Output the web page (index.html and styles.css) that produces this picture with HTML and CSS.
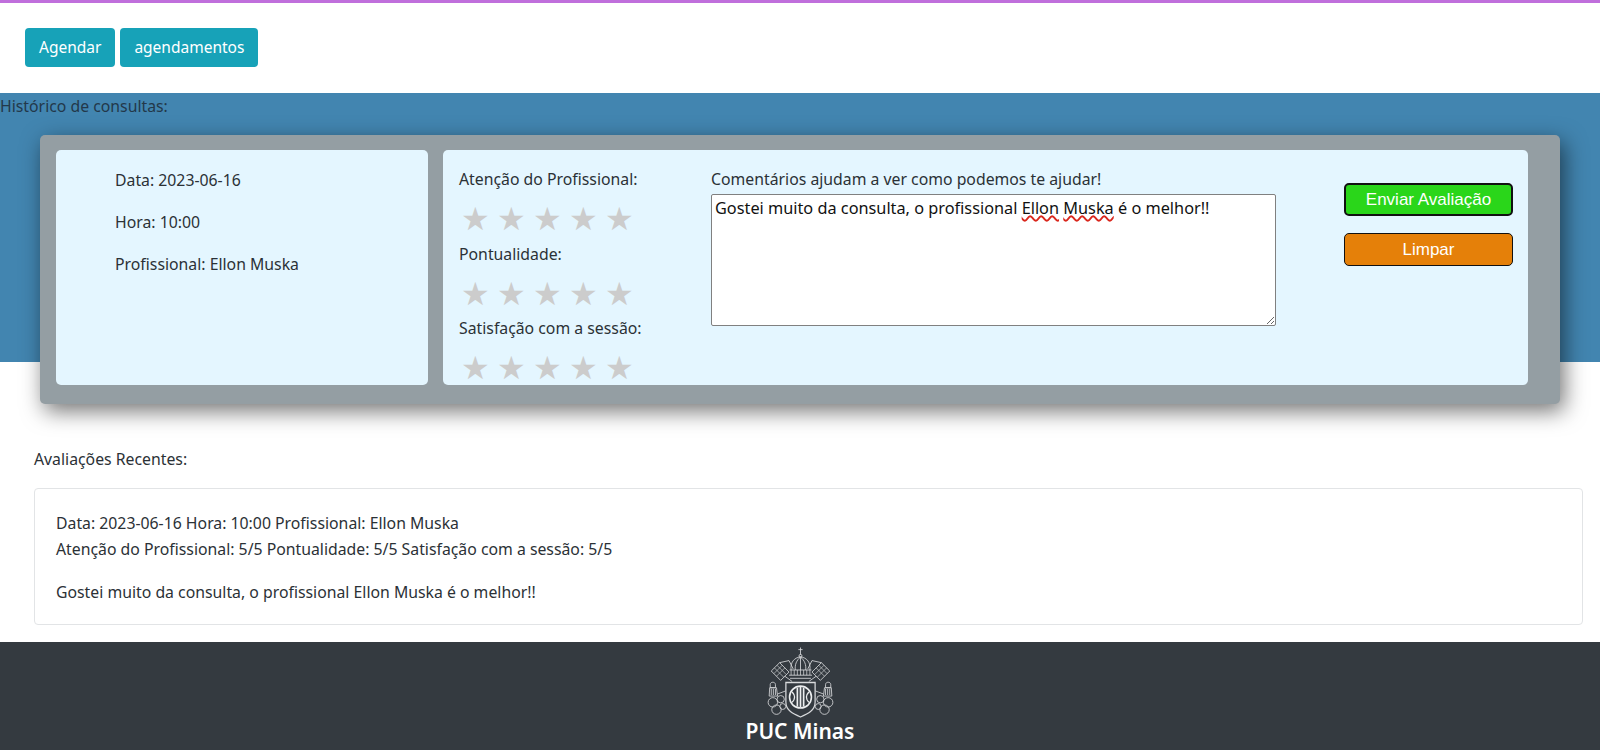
FILE: index.html
```html
<!DOCTYPE html>
<html lang="pt-BR">
<head>
    <meta charset="UTF-8">
    <meta name="viewport" content="width=device-width, initial-scale=1.0">
    <title>Histórico de consultas</title>
    <link rel="stylesheet" href="styles.css">
</head>
<body>
    <nav class="topbar">
        <a class="nav-btn" href="#">Agendar</a>
        <a class="nav-btn" href="#">agendamentos</a>
    </nav>

    <section class="history">
        <p class="history-title">Histórico de consultas:</p>
        <div class="history-card">
            <div class="panel info-panel">
                <p>Data: 2023-06-16</p>
                <p>Hora: 10:00</p>
                <p>Profissional: Ellon Muska</p>
            </div>
            <div class="panel rating-panel">
                <div class="ratings">
                    <p class="rating-label">Atenção do Profissional:</p>
                    <div class="stars">★★★★★</div>
                    <p class="rating-label">Pontualidade:</p>
                    <div class="stars">★★★★★</div>
                    <p class="rating-label">Satisfação com a sessão:</p>
                    <div class="stars">★★★★★</div>
                </div>
                <div class="comment">
                    <p class="comment-label">Comentários ajudam a ver como podemos te ajudar!</p>
                    <div class="comment-box" contenteditable="true" spellcheck="false">Gostei muito da consulta, o profissional <span class="misspelled">Ellon</span> <span class="misspelled">Muska</span> é o melhor!!</div>
                </div>
                <div class="actions">
                    <button class="btn-send">Enviar Avaliação</button>
                    <button class="btn-clear">Limpar</button>
                </div>
            </div>
        </div>
    </section>

    <section class="recent">
        <p class="recent-title">Avaliações Recentes:</p>
        <div class="recent-card">
            <p>Data: 2023-06-16 Hora: 10:00 Profissional: Ellon Muska<br>Atenção do Profissional: 5/5 Pontualidade: 5/5 Satisfação com a sessão: 5/5</p>
            <p>Gostei muito da consulta, o profissional Ellon Muska é o melhor!!</p>
        </div>
    </section>

    <footer class="footer">
        <svg class="crest" viewBox="0 0 64 68" width="67" height="71" fill="none" stroke="#d8dadc" stroke-width="0.8">
            <!-- cross and dome -->
            <path d="M32 0.500v7M30 2.500h4"/>
            <circle cx="32" cy="8.500" r="1.400"/>
            <path d="M23 22c-1-7 3-12 9-12.500c6 .5 10 5.500 9 12.500"/>
            <path d="M27 22c-.5-5 1-9 5-12.500M37 22c.5-5-1-9-5-12.500M32 10v12"/>
            <path d="M21.500 22h21M21 27h22M22 30h20"/>
            <path d="M23 22v5M26 22v5M29 22v5M32 22v5M35 22v5M38 22v5M41 22v5" stroke-width="0.7"/>
            <!-- keys, lattice heads -->
            <path d="M12 15l9 9-8 8-9-9z"/>
            <path d="M9.500 17.500l9 9M7 20l9 9M14.500 17.500l-8 8M17 20l-8 8" stroke-width="0.6"/>
            <path d="M52 15l-9 9 8 8 9-9z"/>
            <path d="M54.500 17.500l-9 9M57 20l-9 9M49.500 17.500l8 8M47 20l8 8" stroke-width="0.6"/>
            <path d="M12 15l9-2 4 8M52 15l-9-2-4 8M17 28l7 5M47 28l-7 5"/>
            <!-- tassels -->
            <path d="M3 36c0-3 5-3 5 0v3H3zM2.500 39h6.500l1 8H2zM4 40v6M6 40v6M8 40v6"/>
            <path d="M56 36c0-3 5-3 5 0v3h-5zM55 39h6.500l.5 8h-8zM56 40v6M58 40v6M60 40v6"/>
            <path d="M10 45l8-3M54 45l-8-3"/>
            <!-- rings -->
            <circle cx="5.500" cy="53" r="4.500"/>
            <circle cx="13" cy="50" r="3.500"/>
            <circle cx="9" cy="60" r="4.500"/>
            <circle cx="15" cy="57" r="2.800"/>
            <circle cx="58.500" cy="53" r="4.500"/>
            <circle cx="51" cy="50" r="3.500"/>
            <circle cx="55" cy="60" r="4.500"/>
            <circle cx="49" cy="57" r="2.800"/>
            <!-- shield -->
            <path d="M18 34h28v19c0 8-7 11-14 14c-7-3-14-6-14-14z" fill="#343a40" stroke-width="1.200"/>
            <circle cx="32" cy="48" r="10.500" stroke="#eceeef" stroke-width="1.500"/>
            <path d="M29 39v18M32 38v20M35 39v18" stroke="#eceeef" stroke-width="1.600"/>
            <path d="M24 43c3 3 3 7 0 10M40 43c-3 3-3 7 0 10" stroke="#eceeef" stroke-width="1.400"/>
        </svg>
        <div class="footer-name">PUC Minas</div>
    </footer>
</body>
</html>
```

FILE: styles.css
```css
* {
    box-sizing: border-box;
}
html, body {
    height: 750px;
    overflow: hidden;
}
body {
    margin: 0;
    font-family: "Noto Sans", "Open Sans", sans-serif;
    font-size: 15.800px;
    line-height: 24px;
    color: #2b3136;
    background-color: #fff;
}
p {
    margin: 0;
}
.topbar {
    height: 93px;
    padding: 25px 25px 0;
    display: flex;
    align-items: flex-start;
    gap: 5px;
    border-top: 3px solid #c06fdc;
}
.nav-btn {
    display: block;
    height: 39px;
    padding: 0 14px;
    line-height: 39px;
    font-size: 15.500px;
    color: #fff;
    text-decoration: none;
    background-color: #17a2b8;
    border-radius: 4px;
}
.history {
    height: 269px;
    background-color: #4285b0;
}
.history-title {
    height: 42px;
    padding-top: 1px;
    color: #23384a;
}
.history-card {
    display: flex;
    gap: 15px;
    width: 1520px;
    height: 269px;
    margin-left: 40px;
    padding: 15px 32px 19px 16px;
    background-color: #949ea3;
    border-radius: 5px;
    box-shadow: 4px 7px 22px rgba(0, 0, 0, 0.55);
}
.panel {
    height: 235px;
    background-color: #e4f6ff;
    border-radius: 5px;
}
.info-panel {
    flex: none;
    width: 372px;
    padding: 18px 59px;
}
.info-panel p {
    margin-bottom: 18px;
}
.rating-panel {
    flex: 1;
    min-width: 0;
    display: flex;
    padding: 17px 16px;
}
.ratings {
    width: 252px;
    flex: none;
}
.rating-label {
    height: 24px;
}
.stars {
    height: 50.500px;
    padding: 8px 0 0 2px;
    font-family: "DejaVu Sans", sans-serif;
    font-size: 32px;
    line-height: 40px;
    letter-spacing: 7.300px;
    color: #ccc;
    white-space: nowrap;
}
.comment {
    width: 565px;
    flex: none;
}
.comment-label {
    height: 27px;
}
.comment-box {
    width: 565px;
    height: 132px;
    padding: 1px 3px;
    background-color: #fff;
    border: 1px solid #808080;
    border-radius: 2px;
    color: #111;
    font-size: 16.300px;
    line-height: 24px;
    outline: none;
    overflow: auto;
    resize: both;
}
.misspelled {
    text-decoration: underline wavy #d9261c 1.500px;
}
.actions {
    display: flex;
    flex-direction: column;
    gap: 17px;
    margin-left: 68px;
    padding-top: 16px;
}
.actions button {
    width: 169px;
    height: 33px;
    padding: 0;
    font-family: "Liberation Sans", Arial, sans-serif;
    font-size: 17px;
    color: #fff;
    border-radius: 5px;
    cursor: pointer;
}
.btn-send {
    background-color: #2ad61a;
    border: 2px solid #111;
}
.btn-clear {
    background-color: #e58009;
    border: 1px solid #111;
}
.recent {
    height: 280px;
    padding: 85px 17px 0 34px;
}
.recent-title {
    margin-bottom: 17px;
}
.recent-card {
    height: 137px;
    padding: 22px 21px;
    background-color: #fff;
    border: 1px solid #e2e4e6;
    border-radius: 4px;
}
.recent-card p {
    line-height: 25.500px;
    margin-bottom: 17.500px;
}
.footer {
    height: 108px;
    padding-top: 5px;
    background-color: #343a40;
    display: flex;
    flex-direction: column;
    align-items: center;
}
.crest {
    display: block;
    flex: none;
    margin-bottom: -2px;
}
.footer-name {
    font-size: 21px;
    font-weight: 600;
    line-height: 30px;
    color: #fff;
}
```
